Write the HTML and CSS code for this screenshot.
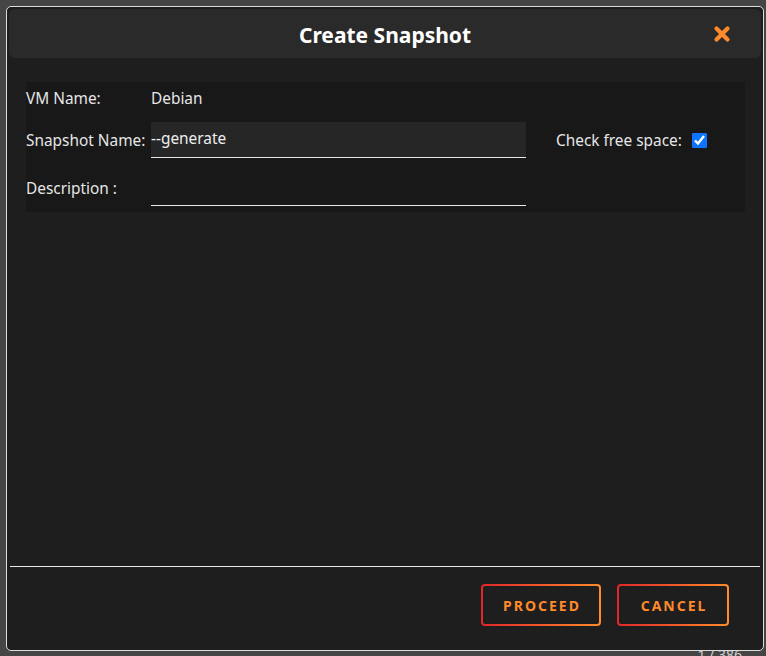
FILE: index.html
```html
<!DOCTYPE html>
<html lang="en">
<head>
    <meta charset="UTF-8">
    <meta name="viewport" content="width=device-width, initial-scale=1.0">
    <title>Create Snapshot</title>
    <link rel="stylesheet" href="styles.css">
</head>
<body>
    <div class="page">
        <div class="pager">1 / 386</div>
    </div>

    <div class="dialog">
        <div class="dialog-header">
            <h2>Create Snapshot</h2>
            <button class="close-btn" title="Close">
                <svg width="18" height="18" viewBox="0 0 18 18">
                    <path d="M3.5 3.5 L14.5 14.5 M14.5 3.5 L3.5 14.5" stroke="#ff8a2b" stroke-width="4.2" stroke-linecap="round" fill="none"/>
                </svg>
            </button>
        </div>

        <div class="dialog-body">
            <div class="snap-form">
                <div class="form-row vm-row">
                    <span class="label">VM Name:</span>
                    <span class="value">Debian</span>
                </div>
                <div class="form-row name-row">
                    <label class="label" for="snap-name">Snapshot Name:</label>
                    <input type="text" id="snap-name" class="text-input filled" value="--generate">
                    <label class="free-space" for="free-space">Check free space:</label>
                    <input type="checkbox" id="free-space" class="check" checked>
                </div>
                <div class="form-row desc-row">
                    <label class="label" for="snap-desc">Description :</label>
                    <input type="text" id="snap-desc" class="text-input">
                </div>
            </div>
        </div>

        <div class="dialog-footer">
            <button class="btn-outline proceed">PROCEED</button>
            <button class="btn-outline cancel">CANCEL</button>
        </div>
    </div>
</body>
</html>
```

FILE: styles.css
```css
body {
    margin: 0;
    padding: 0;
    background-color: #454545;
    font-family: 'Noto Sans', 'Open Sans', sans-serif;
    color: #e6e6e6;
    height: 656px;
    overflow: hidden;
}

.page {
    height: 656px;
    position: relative;
}

.pager {
    position: absolute;
    right: 24px;
    bottom: -8px;
    font-size: 14px;
    color: #d0d0d0;
}

/* Modal dialog, laid over the page */
.dialog {
    position: fixed;
    top: 6px;
    left: 6px;
    width: 758px;
    height: 645px;
    box-sizing: border-box;
    border: 1px solid #dcdcdc;
    border-radius: 5px;
    background-color: #1e1e1e;
    padding: 2px;
    display: flex;
    flex-direction: column;
}

.dialog-header {
    height: 49px;
    background-color: #2a2a2a;
    border-radius: 6px;
    display: flex;
    align-items: center;
    justify-content: center;
    position: relative;
}

.dialog-header h2 {
    margin: 2px 0 0 0;
    font-size: 21px;
    font-weight: bold;
    color: #fff;
}

.close-btn {
    position: absolute;
    right: 30px;
    top: 16px;
    background: none;
    border: none;
    padding: 0;
    cursor: pointer;
    line-height: 0;
}

.dialog-body {
    flex: 1;
    padding: 24px 16px 0 17px;
}

.snap-form {
    background-color: #181818;
    height: 130px;
    box-sizing: border-box;
    padding-top: 6px;
}

.form-row {
    display: flex;
    align-items: center;
    font-size: 15.4px;
}

.label {
    width: 125px;
    flex-shrink: 0;
}

.vm-row {
    height: 20px;
    margin-bottom: 14px;
}

.name-row {
    margin-bottom: 12px;
}

.text-input {
    width: 375px;
    height: 36px;
    box-sizing: border-box;
    background: transparent;
    border: none;
    border-bottom: 1px solid #e8e8e8;
    color: #eee;
    font-family: inherit;
    font-size: 15.4px;
    padding: 0 0 3px 0;
    outline: none;
}

.text-input.filled {
    background-color: #262626;
}

.free-space {
    margin-left: 30px;
}

.check {
    width: 15px;
    height: 15px;
    margin: 0 0 0 10px;
    accent-color: #0b75ff;
}

.dialog-footer {
    border-top: 1px solid #e8e8e8;
    margin: 0 1px;
    padding: 17px 31px 22px 0;
    display: flex;
    justify-content: flex-end;
    gap: 16px;
}

.btn-outline {
    height: 42px;
    padding: 0 0 0 2px;
    border: 2px solid transparent;
    border-radius: 4px;
    background: linear-gradient(#1e1e1e, #1e1e1e) padding-box,
                linear-gradient(to right, #e3262a, #ff8c2b) border-box;
    color: #ff8a2b;
    font-family: inherit;
    font-size: 14px;
    font-weight: bold;
    letter-spacing: 2px;
    cursor: pointer;
}

.proceed {
    width: 120px;
}

.cancel {
    width: 112px;
}
```
